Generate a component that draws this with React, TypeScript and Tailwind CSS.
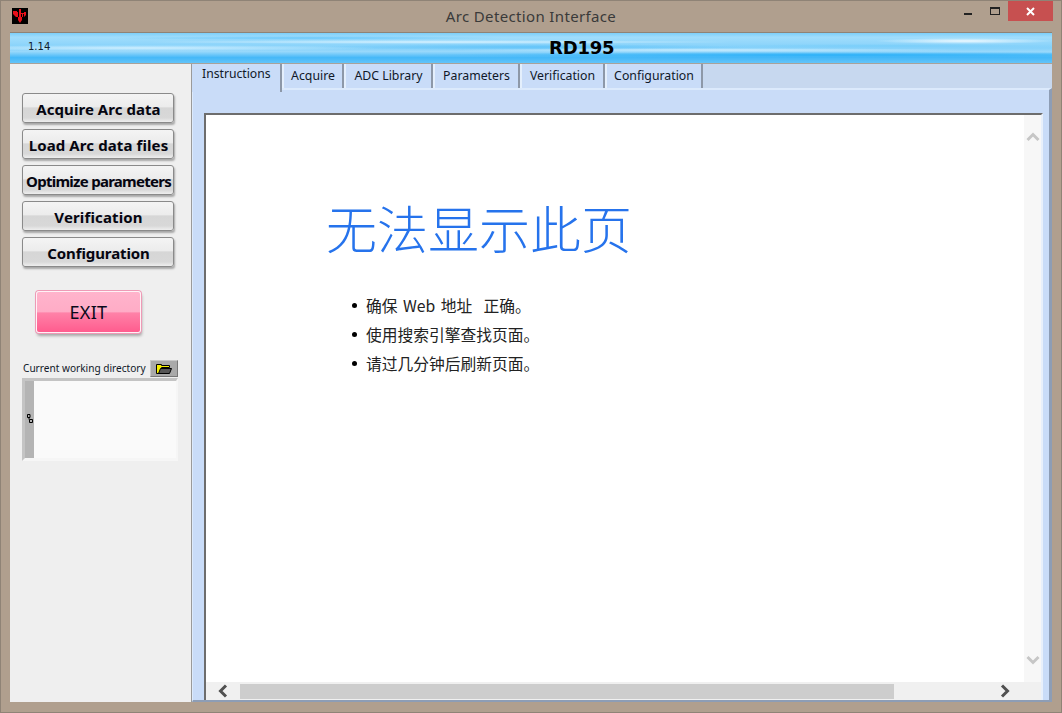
import React from 'react';

const tabs = ['Acquire', 'ADC Library', 'Parameters', 'Verification', 'Configuration'];
const tabWidths = ['w-[62px]', 'w-[89px]', 'w-[87px]', 'w-[85px]', 'w-[98px]'];
const sideButtons = [
  { label: 'Acquire Arc data', track: 'tracking-[0.05px]' },
  { label: 'Load Arc data files', track: 'tracking-[0.1px]' },
  { label: 'Optimize parameters', track: 'tracking-[-0.73px]' },
  { label: 'Verification', track: 'tracking-[0.13px]' },
  { label: 'Configuration', track: 'tracking-[-0.1px]' },
];
const pageHints = ['确保 Web 地址\u00a0\u00a0正确。', '使用搜索引擎查找页面。', '请过几分钟后刷新页面。'];

const SideButton = ({ label, track }: { label: string; track: string }) => (
  <button className={`w-[152px] h-[30px] rounded-[3px] border border-[#8a8a8a] shadow-[1px_2px_2px_rgba(0,0,0,0.3)] bg-[linear-gradient(#f4f4f4_0%,#ececec_45%,#d6d6d6_50%,#d8d8d8_85%,#eeeeee_100%)] text-[15px] font-bold text-[#050510] whitespace-nowrap flex items-center justify-center pt-[2px] pl-[1px] ${track}`}>
    {label}
  </button>
);

const Chevron = ({ d }: { d: string }) => (
  <svg width="14" height="14" viewBox="0 0 14 14">
    <path d={d} fill="none" stroke="currentColor" strokeWidth="3" />
  </svg>
);

export default function App() {
  return (
    <div className="w-[1062px] h-[713px] bg-[#b09f8e] border border-[#8f8376] font-['Noto_Sans','Noto_Sans_CJK_SC',sans-serif] flex flex-col overflow-hidden">
      {/* title bar */}
      <div className="h-[31px] shrink-0 flex items-start relative">
        <svg width="16" height="16" viewBox="0 0 16 16" className="ml-[11px] mt-[7px]">
          <rect width="16" height="16" fill="#000" />
          <path d="M1 3h4v1h2V1h2v3h5v3l-2 2h-2v3l-2 3-2-3V9H4L1 6z" fill="#e8101a" />
          <path d="M6 4h1v5H6zM9 4h3v1H9zM9 6h1v3H9zM11 6h1v3h-1z" fill="#000" />
        </svg>
        <div className="absolute left-0 right-0 top-[5px] text-center text-[15px] leading-[20px] tracking-[0.35px] text-[#3a3a3a]">Arc Detection Interface</div>
        <div className="ml-auto flex items-start">
          <div className="w-[8px] h-[2px] bg-[#222] mt-[12px] mr-[18px]" />
          <div className="w-[10px] h-[8px] border border-[#222] border-t-[2px] mt-[6px] mr-[8px]" />
          <div className="w-[45px] h-[20px] bg-[#c75050] flex items-center justify-center mr-[8px]">
            <svg width="9" height="9" viewBox="0 0 9 9"><path d="M1 1l7 7M8 1l-7 7" stroke="#fff" strokeWidth="2" /></svg>
          </div>
        </div>
      </div>

      <div className="flex-1 mx-[9px] mb-[10px] border-t border-[#8f8376] flex flex-col min-h-0">
        {/* banner */}
        <div className="h-[30px] shrink-0 flex items-center relative bg-[radial-gradient(ellipse_90px_3px_at_955px_8px,#eef9ff,transparent),radial-gradient(ellipse_300px_2px_at_430px_9px,#d8f2ff,transparent),radial-gradient(ellipse_240px_3px_at_130px_15px,#d0efff,transparent),radial-gradient(ellipse_260px_2px_at_700px_17px,#c8ecff,transparent),radial-gradient(ellipse_200px_2px_at_300px_5px,#6ac8fa,transparent),radial-gradient(ellipse_220px_3px_at_520px_14px,#62c4f9,transparent),radial-gradient(ellipse_180px_2px_at_880px_13px,#78cefa,transparent),radial-gradient(ellipse_420px_3px_at_820px_22px,#2ab0f8,transparent),linear-gradient(180deg,#7ccffa_0%,#a0ddfc_14%,#93d7fb_32%,#84d1fa_50%,#98d8fb_62%,#45b8f8_82%,#63c4f9_100%)]">
          <span className="ml-[18px] mb-[4px] text-[10px] text-[#10202c] font-['DejaVu_Sans',sans-serif]">1.14</span>
          <span className="absolute left-[539px] top-[3px] text-[18px] leading-[24px] font-bold text-black font-['DejaVu_Sans',sans-serif] tracking-[-0.2px]">RD195</span>
        </div>

        <div className="flex-1 flex min-h-0 border-t border-[#a8a29a]">
          {/* left panel */}
          <div className="w-[182px] shrink-0 bg-[#efefef] border-r border-[#9a9a9a] pl-[12px] pt-[29px] flex flex-col">
            <div className="flex flex-col gap-[6px]">
              {sideButtons.map((b) => <SideButton key={b.label} label={b.label} track={b.track} />)}
            </div>
            <button className="mt-[24px] ml-[14px] w-[105px] h-[42px] rounded-[3px] border border-[#fff2f6] ring-1 ring-[#ee9ab6] shadow-[1px_3px_3px_rgba(0,0,0,0.3)] bg-[linear-gradient(#ffb4cc_0%,#ffacc6_50%,#ff82a8_52%,#ff5c8e_100%)] text-[18px] tracking-[0.3px] text-[#0a0a1a] flex items-center justify-center">
              EXIT
            </button>
            <div className="mt-[26px] flex items-center w-[156px] justify-between h-[18px]">
              <span className="ml-[1px] pt-[2px] text-[10.1px] text-[#101828] whitespace-nowrap">Current working directory</span>
              <div className="w-[28px] h-[17px] bg-[#a9a9a9] border-t border-l border-[#c8c8c8] border-b border-r border-b-[#777] border-r-[#777] flex items-center justify-center">
                <svg width="16" height="11" viewBox="0 0 16 11">
                  <path d="M.5 10.5V1.5h5v1h8v2h-8v6z" fill="#f6f000" stroke="#000" strokeWidth="1" />
                  <path d="M2.5 10.5l2-5h11l-2 5z" fill="#555" stroke="#000" strokeWidth="1" />
                </svg>
              </div>
            </div>
            <div className="mt-[1px] w-[156px] h-[83px] bg-[#fafafa] border-t-[3px] border-l-[3px] border-[#c4c4c4] border-r-[2px] border-b-[3px] border-r-[#f6f6f6] border-b-[#f6f6f6] flex">
              <div className="w-[9px] bg-[#b4b4b4] flex items-center justify-center pb-[2px]">
                <svg width="6" height="10" viewBox="0 0 6 10">
                  <path d="M.5.5h2.5v3h-2.5zM2 3.5v2M2.5 5.5h3v3h-3z" fill="none" stroke="#000" strokeWidth="1" />
                </svg>
              </div>
            </div>
          </div>

          {/* tab area */}
          <div className="flex-1 flex flex-col min-w-0 bg-[#c7d8ef]">
            <div className="h-[24px] shrink-0 flex items-start relative z-10">
              <div className="w-[90px] h-[28px] bg-[#c9dcf8] border-r-2 border-[#8d98a8] text-[12.2px] leading-[20px] text-[#101828] pl-[10px] whitespace-nowrap">Instructions</div>
              {tabs.map((t, i) => (
                <div key={t} className={`${tabWidths[i]} h-[24px] bg-[#c9dcf8] border-l-2 border-l-[#e4effc] border-r-2 border-r-[#8d98a8] text-[12.3px] leading-[24px] text-[#101828] text-center whitespace-nowrap`}>{t}</div>
              ))}
            </div>
            <div className="flex-1 flex flex-col min-h-0 bg-[#c9dcf8] border-t-[2px] border-[#dceafc] border-r-[3px] border-r-[#8d9db5] border-b-[2px] border-b-[#8d9db5] border-l border-l-[#dceafc] pl-[11px] pr-[6px] pt-[23px]">
              <div className="flex-1 min-h-0 bg-white border-t-2 border-l-2 border-[#6d6d6d] border-r-2 border-r-[#e8f0fb] flex flex-col">
                <div className="flex-1 flex min-h-0">
                  <div className="flex-1 min-w-0 pl-[120px] pt-[80px]">
                    <h1 className="text-[51px] leading-[64px] font-light text-[#2673ec] font-['Noto_Sans_CJK_SC',sans-serif] whitespace-nowrap">无法显示此页</h1>
                    <ul className="mt-[32px] pl-[26px] text-[15.75px] leading-[29px] text-[#222] font-['Noto_Sans_CJK_SC',sans-serif] [word-spacing:2px]">
                      {pageHints.map((h) => (
                        <li key={h} className="flex items-center gap-[9px] whitespace-pre">
                          <span className="w-[5px] h-[5px] rounded-full bg-black shrink-0" />
                          {h}
                        </li>
                      ))}
                    </ul>
                  </div>
                  <div className="w-[17px] shrink-0 bg-[#f7f7f7] flex flex-col items-center justify-between pt-[15px] pb-[15px] text-[#c6c6c6]">
                    <Chevron d="M1.5 10L7 4.5 12.5 10" />
                    <Chevron d="M1.5 4L7 9.5 12.5 4" />
                  </div>
                </div>
                <div className="h-[18px] shrink-0 bg-[#f0f0f0] flex items-center text-[#505050]">
                  <div className="w-[34px] shrink-0 flex justify-center"><Chevron d="M10 1.5L4.5 7 10 12.5" /></div>
                  <div className="w-[654px] h-[15px] bg-[#cdcdcd]" />
                  <div className="ml-[102px] w-[17px] flex justify-center"><Chevron d="M4 1.5L9.5 7 4 12.5" /></div>
                </div>
              </div>
            </div>
          </div>
        </div>
      </div>
    </div>
  );
}
